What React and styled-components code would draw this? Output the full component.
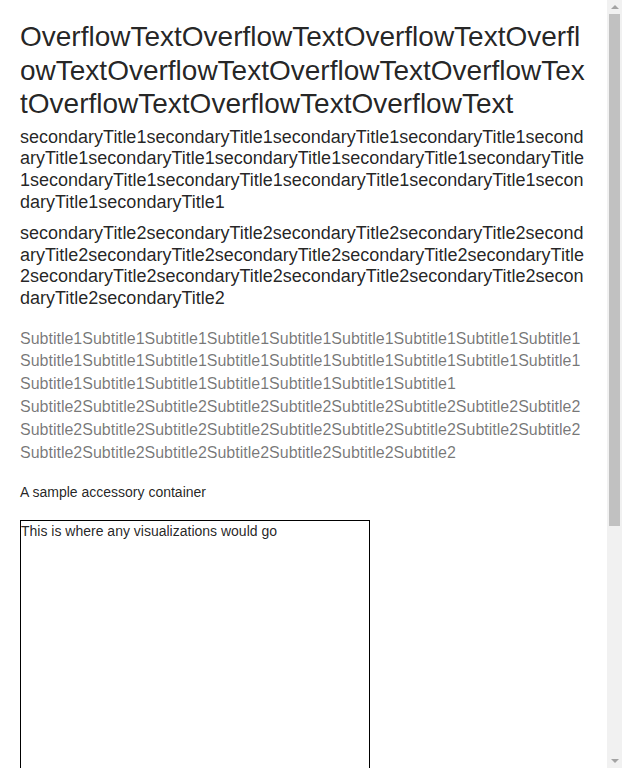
import React from "react";
import styled, { createGlobalStyle } from "styled-components";

const GlobalStyle = createGlobalStyle`
  html, body {
    margin: 0;
    padding: 0;
    background: #fff;
  }
  body {
    font-family: "Liberation Sans", Arial, sans-serif;
    color: rgba(0, 0, 0, 0.87);
  }
`;

const Page = styled.div`
  width: 607px;
  box-sizing: border-box;
  padding: 20px;
  display: flex;
  flex-direction: column;
`;

const Header = styled.header`
  display: flex;
  flex-direction: column;
`;

const Title = styled.h1`
  margin: 0 0 6px;
  font-size: 28px;
  font-weight: 400;
  line-height: 1.2;
  word-break: break-all;
`;

const SecondaryTitle = styled.h2`
  margin: 0 0 ${(p) => (p.$last ? "0" : "10px")};
  font-size: 18px;
  font-weight: 400;
  line-height: 1.2;
  word-break: break-all;
`;

const Subtitles = styled.div`
  margin-top: 18px;
  display: flex;
  flex-direction: column;
`;

const Subtitle = styled.p`
  margin: 0;
  font-size: 16px;
  line-height: 1.425;
  color: rgba(0, 0, 0, 0.54);
  word-break: break-all;
`;

const Accessory = styled.div`
  margin-top: 18px;
  font-size: 14px;
  line-height: 20px;
`;

const VizBox = styled.div`
  margin-top: 18px;
  width: 350px;
  height: 571px;
  box-sizing: border-box;
  border: 1px solid #000;
  font-size: 14px;
  line-height: 20px;
`;

// fake window scrollbar, drawn over the right edge
const ScrollTrack = styled.div`
  position: fixed;
  top: 0;
  right: 0;
  width: 15px;
  height: 100vh;
  background: #f1f1f1;
  display: flex;
  flex-direction: column;
  align-items: center;
`;

const Arrow = styled.div`
  width: 0;
  height: 0;
  margin: 5px 0;
  border-left: 4px solid transparent;
  border-right: 4px solid transparent;
  ${(p) =>
    p.$down
      ? "border-top: 4px solid #a3a3a3;"
      : "border-bottom: 4px solid #a3a3a3;"}
`;

const Thumb = styled.div`
  width: 11px;
  height: 512px;
  margin-bottom: auto;
  background: #c1c1c1;
`;

const repeat = (s, n) => Array(n).fill(s).join("");

const App = () => {
  return (
    <>
      <GlobalStyle />
      <Page>
        <Header>
          <Title>{repeat("OverflowText", 10)}</Title>
          <SecondaryTitle>{repeat("secondaryTitle1", 15)}</SecondaryTitle>
          <SecondaryTitle $last>{repeat("secondaryTitle2", 15)}</SecondaryTitle>
        </Header>
        <Subtitles>
          <Subtitle>{repeat("Subtitle1", 25)}</Subtitle>
          <Subtitle>{repeat("Subtitle2", 25)}</Subtitle>
        </Subtitles>
        <Accessory>A sample accessory container</Accessory>
        <VizBox>This is where any visualizations would go</VizBox>
      </Page>
      <ScrollTrack>
        <Arrow />
        <Thumb />
        <Arrow $down />
      </ScrollTrack>
    </>
  );
};

export default App;
